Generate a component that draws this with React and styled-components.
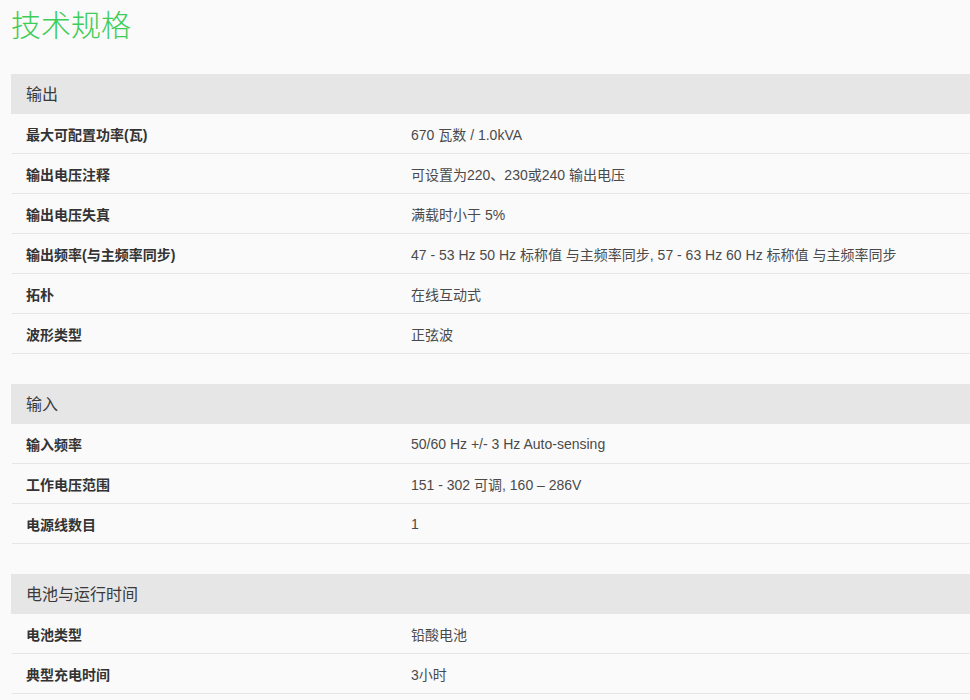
import React from "react";
import styled, { createGlobalStyle } from "styled-components";

const GlobalStyle = createGlobalStyle`
  html, body {
    margin: 0;
    padding: 0;
    background: #fafafa;
  }
  body {
    font-family: "Liberation Sans", "Noto Sans CJK SC", sans-serif;
    color: #333;
  }
`;

const Page = styled.div`
  padding-left: 11px;
`;

const Title = styled.h1`
  margin: 0 0 28px 0;
  font-family: "Noto Sans CJK SC", sans-serif;
  font-weight: 300;
  font-size: 30px;
  line-height: 46px;
  color: #3dcd58;
`;

const Section = styled.section`
  margin-bottom: 30px;
`;

const SectionHeader = styled.div`
  box-sizing: border-box;
  height: 40px;
  display: flex;
  align-items: center;
  padding: 0 15px 3px;
  background: #e6e6e6;
  font-size: 16px;
  color: #3a3a3a;
`;

const Row = styled.div`
  box-sizing: border-box;
  height: 40px;
  margin-left: 1px;
  display: grid;
  grid-template-columns: 384px 1fr;
  align-items: center;
  border-bottom: 1px solid #e6e6e6;
  font-size: 14px;
`;

const Label = styled.div`
  padding-left: 14px;
  font-weight: bold;
  color: #333;
`;

const Value = styled.div`
  padding-left: 15px;
  color: #4a4a4a;
  white-space: nowrap;
`;

const sections = [
  {
    title: "输出",
    rows: [
      ["最大可配置功率(瓦)", "670 瓦数 / 1.0kVA"],
      ["输出电压注释", "可设置为220、230或240 输出电压"],
      ["输出电压失真", "满载时小于 5%"],
      [
        "输出频率(与主频率同步)",
        "47 - 53 Hz 50 Hz 标称值 与主频率同步, 57 - 63 Hz 60 Hz 标称值 与主频率同步",
      ],
      ["拓朴", "在线互动式"],
      ["波形类型", "正弦波"],
    ],
  },
  {
    title: "输入",
    rows: [
      ["输入频率", "50/60 Hz +/- 3 Hz Auto-sensing"],
      ["工作电压范围", "151 - 302 可调, 160 – 286V"],
      ["电源线数目", "1"],
    ],
  },
  {
    title: "电池与运行时间",
    rows: [
      ["电池类型", "铅酸电池"],
      ["典型充电时间", "3小时"],
    ],
  },
];

export default function App() {
  return (
    <Page>
      <GlobalStyle />
      <Title>技术规格</Title>
      {sections.map((s) => (
        <Section key={s.title}>
          <SectionHeader>{s.title}</SectionHeader>
          {s.rows.map(([k, v]) => (
            <Row key={k}>
              <Label>{k}</Label>
              <Value>{v}</Value>
            </Row>
          ))}
        </Section>
      ))}
    </Page>
  );
}
